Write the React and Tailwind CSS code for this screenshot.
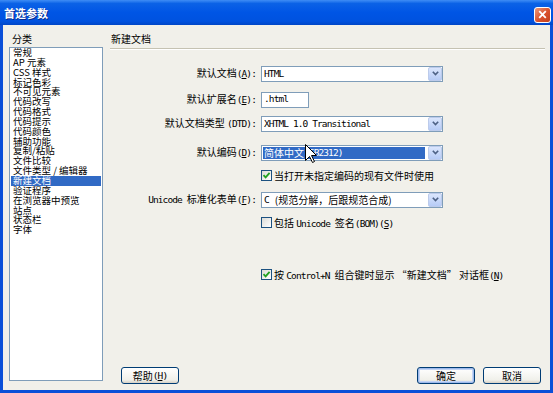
import React from "react";

const M = ({ children, className = "" }) => (
  <span className={"font-['DejaVu_Sans_Mono',monospace] text-[9.5px] tracking-[-0.9px] " + className}>{children}</span>
);

const U = ({ children }) => <span className="underline underline-offset-1">{children}</span>;

function Arrow() {
  return (
    <div className="w-[14px] self-stretch shrink-0 flex items-center justify-center rounded-[2px] border border-[#bccbeb] bg-[linear-gradient(180deg,#dbe6fd,#b6cbf6)]">
      <svg width="7" height="5" viewBox="0 0 7 5">
        <path d="M0.8 0.8 L3.5 3.6 L6.2 0.8" fill="none" stroke="#4d6185" strokeWidth="1.6" />
      </svg>
    </div>
  );
}

function Select({ children, selected }) {
  return (
    <div className="ml-[5px] w-[182px] h-[16px] flex items-stretch border border-[#7f9db9] bg-white">
      {selected ? (
        <div className="flex-1 flex items-center my-[1px] ml-[1px] mr-[3px] pl-[1px] bg-[#316ac5] text-white leading-[11px]">
          {children}
        </div>
      ) : (
        <div className="flex-1 flex items-center pl-[2px] leading-[14px]">{children}</div>
      )}
      <Arrow />
    </div>
  );
}

function Check({ checked }) {
  return (
    <div className="w-[11px] h-[11px] shrink-0 border border-[#1c5180] bg-[linear-gradient(135deg,#dcdcd7,#ffffff)] flex items-center justify-center">
      {checked && (
        <svg width="9" height="9" viewBox="0 0 9 9">
          <path d="M1.5 4.2 L3.6 6.4 L7.6 1.8" fill="none" stroke="#21a121" strokeWidth="1.8" />
        </svg>
      )}
    </div>
  );
}

function Label({ children }) {
  return <div className="w-[153px] shrink-0 text-right leading-[16px] whitespace-nowrap">{children}</div>;
}

function Btn({ children, def }) {
  return (
    <div
      className={
        "w-[58px] h-[17px] rounded-[3px] border border-[#003c74] flex items-center justify-center leading-[10px] bg-[linear-gradient(180deg,#ffffff,#f0f0ea_80%,#d6d0c5)] " +
        (def ? "shadow-[inset_0_0_0_1px_#9db9eb,inset_0_0_0_2px_#c4d5f5]" : "")
      }
    >
      {children}
    </div>
  );
}

const items = [
  "常规",
  "AP 元素",
  "CSS 样式",
  "标记色彩",
  "不可见元素",
  "代码改写",
  "代码格式",
  "代码提示",
  "代码颜色",
  "辅助功能",
  "复制/粘贴",
  "文件比较",
  "文件类型 / 编辑器",
  "新建文档",
  "验证程序",
  "在浏览器中预览",
  "站点",
  "状态栏",
  "字体",
];

export default function App() {
  return (
    <div className="relative w-[553px] h-[393px] flex flex-col overflow-hidden font-['Noto_Sans_CJK_SC',sans-serif] text-[10px] text-black">
      {/* title bar */}
      <div className="h-[25px] shrink-0 flex items-center justify-between pl-[4px] pr-[2px] bg-[linear-gradient(180deg,#3f8df5_0%,#0b62e6_14%,#0055e5_50%,#0052df_85%,#0046c6_100%)]">
        <span className="text-white font-bold text-[11px] leading-[12px] [text-shadow:1px_1px_0_#0a2a8c]">首选参数</span>
        <div className="mt-[4px] w-[17px] h-[16px] rounded-[3px] border border-white bg-[linear-gradient(135deg,#ec9a7c,#d9512c_55%,#c1401e)] flex items-center justify-center">
          <svg width="9" height="9" viewBox="0 0 9 9">
            <path d="M1.2 1.2 L7.8 7.8 M7.8 1.2 L1.2 7.8" stroke="#fff" strokeWidth="1.8" />
          </svg>
        </div>
      </div>

      {/* body */}
      <div className="flex-1 flex bg-[#f1f0ea] border-l-[3px] border-r-[3px] border-b-[3px] border-[#0a4fd8]">
        {/* left */}
        <div className="w-[100px] shrink-0 flex flex-col pl-[6px] pt-[9px] pb-[9px]">
          <div className="h-[10px] leading-[10px] pl-[3px]">分类</div>
          <div className="mt-[3px] flex-1 border border-[#7f9db9] bg-white overflow-hidden text-[9.5px]">
            {items.map((t) =>
              t === "新建文档" ? (
                <div key={t} className="h-[9.85px] leading-[9.85px] mx-[1px] pl-[2px] bg-[#316ac5] text-white whitespace-nowrap">
                  {t}
                </div>
              ) : (
                <div key={t} className="h-[9.85px] leading-[9.85px] pl-[3px] whitespace-nowrap">
                  {t}
                </div>
              )
            )}
          </div>
        </div>

        {/* right */}
        <div className="flex-1 flex flex-col">
          <div className="ml-[7px] mr-[5px] h-[24px] pt-[9px] border-b border-[#c5c2b2] shadow-[0_1px_0_#ffffff]">
            <div className="pl-[1px] leading-[10px]">新建文档</div>
          </div>

          <div className="flex items-center mt-[16px]">
            <Label>
              默认文档<M>(<U>A</U>):</M>
            </Label>
            <Select>
              <M>HTML</M>
            </Select>
          </div>

          <div className="flex items-center mt-[9px]">
            <Label>
              默认扩展名<M>(<U>E</U>):</M>
            </Label>
            <div className="ml-[5px] w-[48px] h-[16px] border border-[#7f9db9] bg-white flex items-center pl-[2px]">
              <M>.html</M>
            </div>
          </div>

          <div className="flex items-center mt-[7px]">
            <Label>
              默认文档类型 <M>(DTD):</M>
            </Label>
            <Select>
              <M>XHTML 1.0 Transitional</M>
            </Select>
          </div>

          <div className="flex items-center mt-[12px]">
            <Label>
              默认编码<M>(<U>D</U>):</M>
            </Label>
            <Select selected>
              简体中文 <M>(GB2312)</M>
            </Select>
          </div>

          <div className="flex items-center h-[11px] mt-[9px] ml-[158px] gap-[2px]">
            <Check checked />
            <span className="leading-[11px] whitespace-nowrap">当打开未指定编码的现有文件时使用</span>
          </div>

          <div className="flex items-center mt-[10px]">
            <Label>
              <M>Unicode </M>标准化表单<M>(<U>F</U>):</M>
            </Label>
            <Select>
              <M className="mr-[6px]">C</M>(规范分解，后跟规范合成)
            </Select>
          </div>

          <div className="flex items-center h-[11px] mt-[9px] ml-[158px] gap-[2px]">
            <Check />
            <span className="leading-[11px] whitespace-nowrap">
              包括 <M>Unicode </M>签名<M>(BOM)(<U>S</U>)</M>
            </span>
          </div>

          <div className="flex items-center h-[11px] mt-[41px] ml-[158px] gap-[2px]">
            <Check checked />
            <span className="leading-[11px] whitespace-nowrap">
              按 <M>Control+N </M>组合键时显示 “新建文档” 对话框<M>(<U>N</U>)</M>
            </span>
          </div>

          <div className="mt-auto flex items-center pl-[18px] pr-[9px] pb-[6px]">
            <Btn>
              帮助<M>(<U>H</U>)</M>
            </Btn>
            <div className="flex-1" />
            <Btn def>确定</Btn>
            <div className="w-[8px]" />
            <Btn>取消</Btn>
          </div>
        </div>
      </div>

      {/* mouse cursor */}
      <svg className="absolute left-[305px] top-[144px]" width="13" height="20" viewBox="0 0 13 20">
        <path d="M0.5 0.5 L0.5 16.5 L4.5 12.5 L7.5 18.5 L9.5 17.5 L6.5 11.5 L11.5 11.5 Z" fill="#fff" stroke="#000" strokeWidth="1" />
      </svg>
    </div>
  );
}
